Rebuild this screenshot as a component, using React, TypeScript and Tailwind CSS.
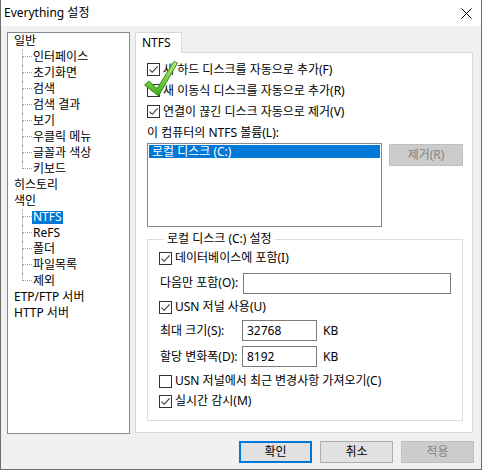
import React from 'react';

const Check: React.FC<{ checked?: boolean }> = ({ checked }) => (
  <span className="w-[13px] h-[13px] border border-[#333333] bg-white flex items-center justify-center shrink-0">
    {checked && (
      <svg width="11" height="11" viewBox="0 0 11 11">
        <path d="M1.6 5.6 L4.2 8.3 L9.6 2.4" stroke="#333333" strokeWidth="1.1" fill="none" />
      </svg>
    )}
  </span>
);

const CheckRow: React.FC<{ checked?: boolean; label: string; h?: string }> = ({ checked, label, h = 'h-[21px]' }) => (
  <div className={`flex items-center ${h}`}>
    <Check checked={checked} />
    <span className="ml-[3px]">{label}</span>
  </div>
);

type Node = { label: string; selected?: boolean; children?: Node[] };

const TREE: Node[] = [
  {
    label: '일반',
    children: [
      { label: '인터페이스' },
      { label: '초기화면' },
      { label: '검색' },
      { label: '검색 결과' },
      { label: '보기' },
      { label: '우클릭 메뉴' },
      { label: '글꼴과 색상' },
      { label: '키보드' },
    ],
  },
  { label: '히스토리' },
  {
    label: '색인',
    children: [
      { label: 'NTFS', selected: true },
      { label: 'ReFS' },
      { label: '폴더' },
      { label: '파일목록' },
      { label: '제외' },
    ],
  },
  { label: 'ETP/FTP 서버' },
  { label: 'HTTP 서버' },
];

const TreeLabel: React.FC<{ node: Node }> = ({ node }) => (
  <span
    className={`px-[1px] h-[13px] flex items-center ${node.selected ? 'bg-[#0078d7] text-white' : ''}`}
  >
    {node.label}
  </span>
);

const Tree: React.FC = () => (
  <div className="w-[123px] h-[402px] border border-[#828790] bg-white flex flex-col">
    {TREE.map((node) => (
      <div key={node.label} className="flex flex-col">
        <div className="h-[16px] flex items-center pl-[5px]">
          <TreeLabel node={node} />
        </div>
        {node.children && (
          <div className="flex flex-col ml-[14px]">
            {node.children.map((child, i) => {
              const last = i === node.children!.length - 1;
              return (
                <div key={child.label} className="h-[16px] flex items-center">
                  <div className="w-[10px] h-full flex flex-col shrink-0">
                    <div className="h-[8px] border-l border-b border-dotted border-[#a0a0a0]" />
                    <div className={`flex-1 ${last ? '' : 'border-l border-dotted border-[#a0a0a0]'}`} />
                  </div>
                  <TreeLabel node={child} />
                </div>
              );
            })}
          </div>
        )}
      </div>
    ))}
  </div>
);

const Field: React.FC<{ value?: string; w: string }> = ({ value, w }) => (
  <div className={`${w} h-[21px] border border-[#7a7a7a] bg-white flex items-center px-[4px]`}>{value}</div>
);

const Button: React.FC<{ label: string; kind?: 'default' | 'normal' | 'disabled'; w?: string }> = ({
  label,
  kind = 'normal',
  w = 'w-[73px]',
}) => {
  const cls =
    kind === 'default'
      ? 'border-2 border-[#0078d7] bg-[#e1e1e1] text-black'
      : kind === 'disabled'
        ? 'border border-[#bfbfbf] bg-[#cccccc] text-[#838383]'
        : 'border border-[#adadad] bg-[#e1e1e1] text-black';
  return <div className={`${w} h-[22px] flex items-center justify-center ${cls}`}>{label}</div>;
};

const GreenTick: React.FC = () => (
  <svg className="absolute left-[142px] top-[60px]" width="36" height="38" viewBox="0 0 36 38">
    <defs>
      <linearGradient id="tick" x1="0" y1="0" x2="0" y2="1">
        <stop offset="0" stopColor="#b8f06c" />
        <stop offset="1" stopColor="#3fae1c" />
      </linearGradient>
    </defs>
    <path
      d="M1.5 25 L6 21 L14 28.5 L31 1.5 L34.5 3 L15.5 36 Z"
      fill="url(#tick)"
      stroke="#2f7f1a"
      strokeWidth="0.9"
      strokeLinejoin="round"
    />
  </svg>
);

export default function App() {
  return (
    <div className="relative w-[482px] h-[470px] bg-[#f0f0f0] border-x border-b border-[#6d6d6d] text-[12px] leading-none text-black font-['Noto_Sans','Noto_Sans_CJK_KR',sans-serif] flex flex-col">
      <div className="h-[26px] bg-white flex items-center justify-between pl-[3px] pr-[9px] text-[12px]">
        <span>Everything 설정</span>
        <svg width="11" height="11" viewBox="0 0 11 11">
          <path d="M0.5 0.5 L10.5 10.5 M10.5 0.5 L0.5 10.5" stroke="#000" strokeWidth="1" />
        </svg>
      </div>

      <div className="flex pt-[6px] pl-[6px]">
        <Tree />
        <div className="ml-[5px] w-[338px] flex flex-col">
          <div className="relative z-10 -mb-px w-[47px] h-[21px] bg-white border border-b-0 border-[#d9d9d9] flex items-center pl-[6px]">
            NTFS
          </div>
          <div className="h-[381px] bg-white border border-[#d9d9d9] flex flex-col pl-[11px] pt-[6px]">
            <CheckRow checked label="새 하드 디스크를 자동으로 추가(F)" />
            <CheckRow label="새 이동식 디스크를 자동으로 추가(R)" />
            <CheckRow checked label="연결이 끊긴 디스크 자동으로 제거(V)" />
            <div className="h-[21px] flex items-center">이 컴퓨터의 NTFS 볼륨(L):</div>
            <div className="flex">
              <div className="w-[235px] h-[84px] border border-[#828790] bg-white p-[1px]">
                <div className="h-[13px] bg-[#0078d7] text-white flex items-center pl-[3px]">로컬 디스크 (C:)</div>
              </div>
              <div className="ml-[7px] mt-px">
                <Button label="제거(R)" kind="disabled" w="w-[74px]" />
              </div>
            </div>
            <fieldset className="mt-[5px] w-[316px] h-[189px] border border-[#dcdcdc] px-[11px]">
              <legend className="ml-[5px] px-[3px] leading-[14px]">로컬 디스크 (C:) 설정</legend>
              <div className="mt-[2px]">
                <CheckRow checked label="데이터베이스에 포함(I)" h="h-[20px]" />
              </div>
              <div className="mt-[4px] flex items-center h-[22px]">
                <span className="w-[84px] pl-px">다음만 포함(O):</span>
                <Field w="w-[208px]" />
              </div>
              <div className="mt-[3px]">
                <CheckRow checked label="USN 저널 사용(U)" h="h-[20px]" />
              </div>
              <div className="mt-[3px] flex items-center h-[21px]">
                <span className="w-[83px] pl-px">최대 크기(S):</span>
                <Field w="w-[75px]" value="32768" />
                <span className="ml-[6px]">KB</span>
              </div>
              <div className="mt-[5px] flex items-center h-[21px]">
                <span className="w-[83px] pl-px">할당 변화폭(D):</span>
                <Field w="w-[75px]" value="8192" />
                <span className="ml-[6px]">KB</span>
              </div>
              <div className="mt-[4px]">
                <CheckRow label="USN 저널에서 최근 변경사항 가져오기(C)" h="h-[20px]" />
              </div>
              <CheckRow checked label="실시간 감시(M)" h="h-[20px]" />
            </fieldset>
          </div>
        </div>
      </div>

      <div className="flex justify-end gap-[8px] pr-[7px] mt-[7px]">
        <Button label="확인" kind="default" />
        <Button label="취소" />
        <Button label="적용" kind="disabled" />
      </div>

      <GreenTick />
    </div>
  );
}
